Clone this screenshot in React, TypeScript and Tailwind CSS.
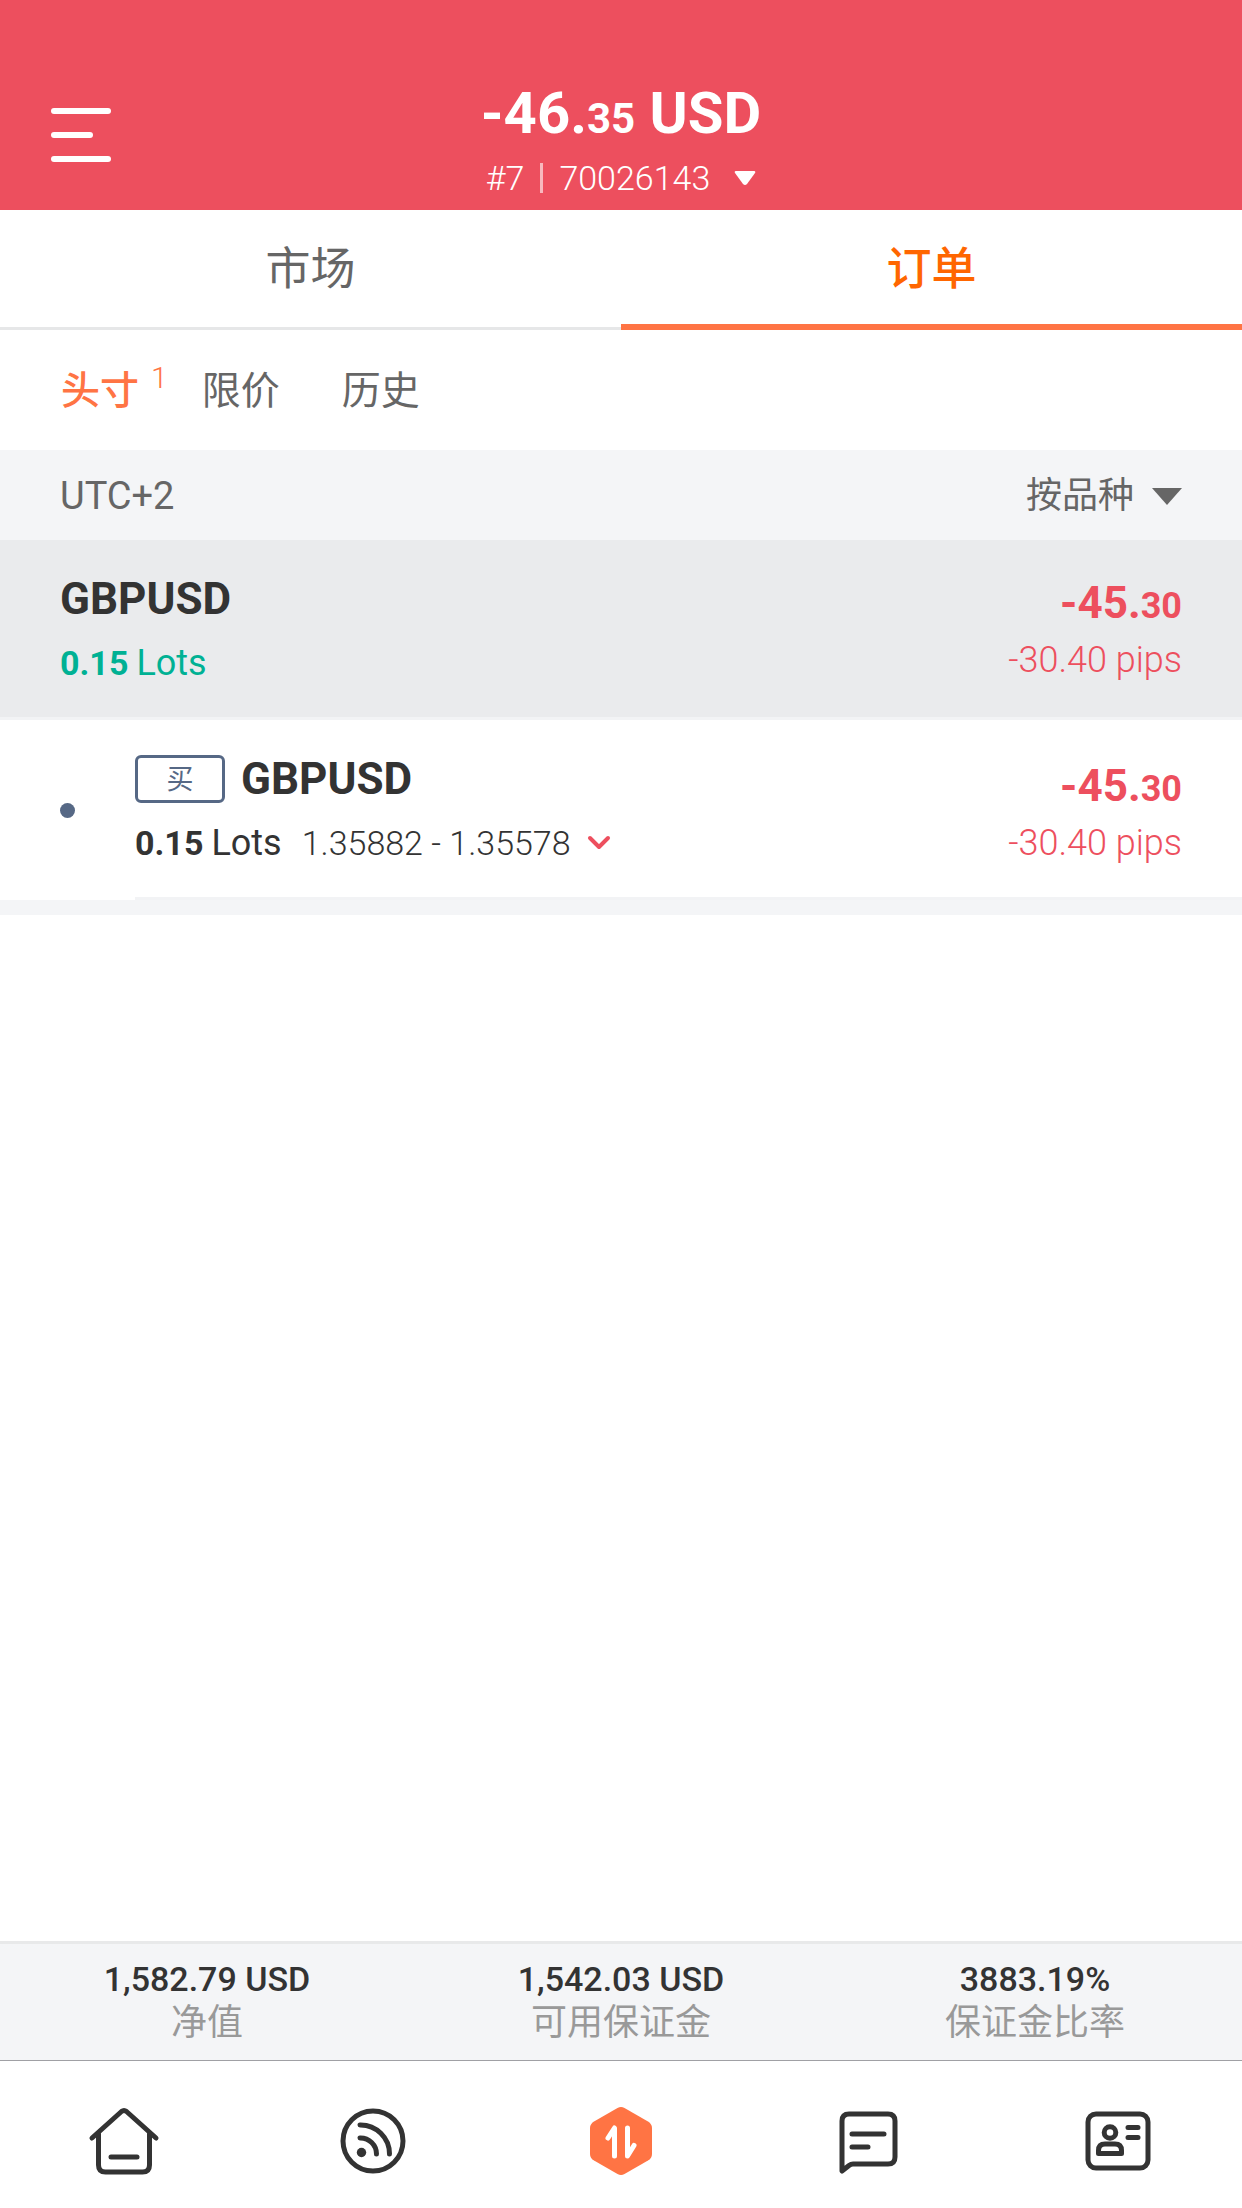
import type { ReactNode } from "react";

const summary = [
  { value: "1,582.79 USD", label: "净值" },
  { value: "1,542.03 USD", label: "可用保证金" },
  { value: "3883.19%", label: "保证金比率" },
];

function Icon({ children }: { children: ReactNode }) {
  return (
    <svg
      className="h-20 w-20"
      viewBox="0 0 80 80"
      fill="none"
      stroke="#333333"
      strokeWidth="5"
      strokeLinecap="round"
      strokeLinejoin="round"
      aria-hidden="true"
    >
      {children}
    </svg>
  );
}

function HomeIcon() {
  return (
    <Icon>
      <path d="M8 37 37.500 10.500Q40 8.500 42.500 10.500L72 37" />
      <path d="M14.500 33V64Q14.500 71 21.500 71H58.500Q65.500 71 65.500 64V33" />
      <path d="M27 56H53" />
    </Icon>
  );
}

function SignalIcon() {
  return (
    <Icon>
      <circle cx="40" cy="40" r="30" />
      <path d="M27 24A29 29 0 0 1 56.500 53" />
      <path d="M27 37A16 16 0 0 1 43.500 53" />
      <circle cx="28.500" cy="51.500" r="4.700" fill="#333333" stroke="none" />
    </Icon>
  );
}

function TradeIcon() {
  return (
    <Icon>
      <path
        d="M36.500 7Q40 5 43.500 7L67 20.500Q71 23 71 27V53Q71 57 67 59.500L43.500 73Q40 75 36.500 73L13 59.500Q9 57 9 53V27Q9 23 13 20.500Z"
        fill="#ff7444"
        stroke="none"
      />
      <path d="M27 37 33.500 27V55" stroke="#ffffff" />
      <path d="M46.500 27V55L53 44.500" stroke="#ffffff" />
    </Icon>
  );
}

function ChatIcon() {
  return (
    <Icon>
      <path d="M13 70V20Q13 13 20 13H59Q66 13 66 20V56Q66 63 59 63H24Q22 63 20 64.500Z" />
      <path d="M23 33H55M23 46H39" />
    </Icon>
  );
}

function ProfileIcon() {
  return (
    <Icon>
      <rect x="10" y="13" width="60" height="54" rx="8" />
      <circle cx="32" cy="31.500" r="5.800" />
      <path d="M20.500 52.500V49.500Q20.500 43 27 43H37Q43.500 43 43.500 49.500V52.500Z" />
      <path d="M50 26.500H60M50 36.500H60" />
    </Icon>
  );
}

const navItems = [
  { name: "首页", icon: <HomeIcon /> },
  { name: "动态", icon: <SignalIcon /> },
  { name: "交易", icon: <TradeIcon /> },
  { name: "消息", icon: <ChatIcon /> },
  { name: "我的", icon: <ProfileIcon /> },
];

function Profit() {
  return (
    <div className="flex flex-col text-right text-[#ed4f5e]">
      <span className="text-[44px] leading-[52px] font-bold">
        -45.<span className="text-[36px]">30</span>
      </span>
      <span className="text-[36px] leading-[56px] font-light">-30.40 pips</span>
    </div>
  );
}

export default function App() {
  return (
    <div className="flex min-h-screen flex-col bg-white font-[Roboto,'Noto_Sans_CJK_SC',sans-serif] text-[#333333]">
      {/* 账户 */}
      <header className="grid h-[210px] grid-cols-[1fr_auto_1fr] items-end bg-[#ed4f5e] px-[51px] pb-2.5 text-white">
        <button className="mb-[38px] flex w-[60px] flex-col gap-[18px]" aria-label="菜单">
          <span className="h-[6px] w-full rounded-full bg-white" />
          <span className="h-[6px] w-[42px] rounded-full bg-white" />
          <span className="h-[6px] w-full rounded-full bg-white" />
        </button>
        <div className="flex flex-col items-center">
          <h1 className="text-[58px] leading-[74px] font-bold">
            -46.<span className="text-[42px]">35</span> USD
          </h1>
          <button className="flex items-center gap-4 text-[34px] leading-[44px] font-light">
            <span>#7</span>
            <span className="h-[30px] w-[3px] bg-white/60" />
            <span>70026143</span>
            <svg className="ml-2 h-[14px] w-[22px]" viewBox="0 0 22 14" fill="white" aria-hidden="true">
              <path d="M2 0H20Q22 0 21 2L13 13Q11 15 9 13L1 2Q0 0 2 0Z" />
            </svg>
          </button>
        </div>
      </header>

      <div className="grid h-[120px] grid-cols-2 text-[45px] text-[#666666]" role="tablist">
        <button role="tab" aria-selected="false" className="border-b-[3px] border-[#e6e7e8] pt-[3px]">
          市场
        </button>
        <button
          role="tab"
          aria-selected="true"
          className="border-b-[6px] border-[#ff7444] pt-[6px] font-medium text-[#ff6600]"
        >
          订单
        </button>
      </div>

      <div className="flex h-[120px] items-center px-[61px] pt-[2px] text-[39px] text-[#666666]">
        <button className="flex items-start font-medium text-[#ff7444]">
          头寸
          <span className="ml-3 text-[30px] leading-[32px] font-light">1</span>
        </button>
        <button className="ml-[34px]">限价</button>
        <button className="ml-[62px]">历史</button>
      </div>

      <div className="flex h-[90px] items-center justify-between bg-[#f4f5f7] px-[60px] pt-[2px] text-[36px] text-[#666666]">
        <span className="text-[38px]">UTC+2</span>
        <button className="flex items-center gap-[18px]">
          按品种
          <svg className="h-[17px] w-[30px]" viewBox="0 0 30 17" fill="#666666" aria-hidden="true">
            <path d="M0 0H30L15 17Z" />
          </svg>
        </button>
      </div>

      <main className="flex-1">
        <section className="flex h-[180px] items-center justify-between border-b-[3px] border-[#f2f3f5] bg-[#eaebed] px-[60px] pt-2">
          <div className="flex flex-col">
            <h2 className="text-[44px] leading-[60px] font-bold">GBPUSD</h2>
            <p className="flex items-baseline gap-2 text-[36px] leading-[68px] text-[#00b194]">
              <b className="text-[34px]">0.15</b>
              <span>Lots</span>
            </p>
          </div>
          <Profit />
        </section>

        <article className="flex h-[180px] items-center pl-[60px]">
          <span className="h-[15px] w-[15px] rounded-full bg-[#566885]" />
          <div className="ml-[60px] flex h-full flex-1 items-end justify-between border-b-[3px] border-[#f2f3f5] pr-[60px] pb-5">
            <div className="flex flex-col">
              <div className="flex items-center gap-4">
                <span className="flex h-12 w-[90px] items-center justify-center rounded-md border-[3px] border-[#566885] pt-[2px] text-[27px] text-[#566885]">
                  买
                </span>
                <h3 className="text-[44px] leading-[60px] font-bold">GBPUSD</h3>
              </div>
              <p className="flex items-baseline text-[36px] leading-[68px]">
                <b className="text-[34px]">0.15</b>
                <span className="ml-2">Lots</span>
                <span className="ml-5 text-[34px] font-light">1.35882 - 1.35578</span>
                <svg
                  className="ml-4 h-5 w-6 self-center"
                  viewBox="0 0 24 20"
                  fill="none"
                  stroke="#ed4f5e"
                  strokeWidth="4"
                  strokeLinecap="round"
                  strokeLinejoin="round"
                  aria-hidden="true"
                >
                  <path d="M3 5 12 14 21 5" />
                </svg>
              </p>
            </div>
            <div className="pb-[6px]">
              <Profit />
            </div>
          </div>
        </article>
        <div className="h-[15px] bg-[#f4f5f7]" />
      </main>

      <footer>
        <dl className="grid h-[120px] grid-cols-3 border-t-[3px] border-b border-t-[#e8e9ea] border-b-[#a0a0a4] bg-[#f4f5f7] pt-3 text-center text-[36px]">
          {summary.map((item) => (
            <div key={item.label} className="flex flex-col-reverse justify-end">
              <dt className="leading-[42px] text-[#999999]">{item.label}</dt>
              <dd className="text-[34px] leading-[46px] font-medium">{item.value}</dd>
            </div>
          ))}
        </dl>
        <nav className="grid h-[147px] grid-cols-5 pt-3">
          {navItems.map((item) => (
            <a key={item.name} href="#" aria-label={item.name} className="flex items-center justify-center">
              {item.icon}
            </a>
          ))}
        </nav>
      </footer>
    </div>
  );
}
